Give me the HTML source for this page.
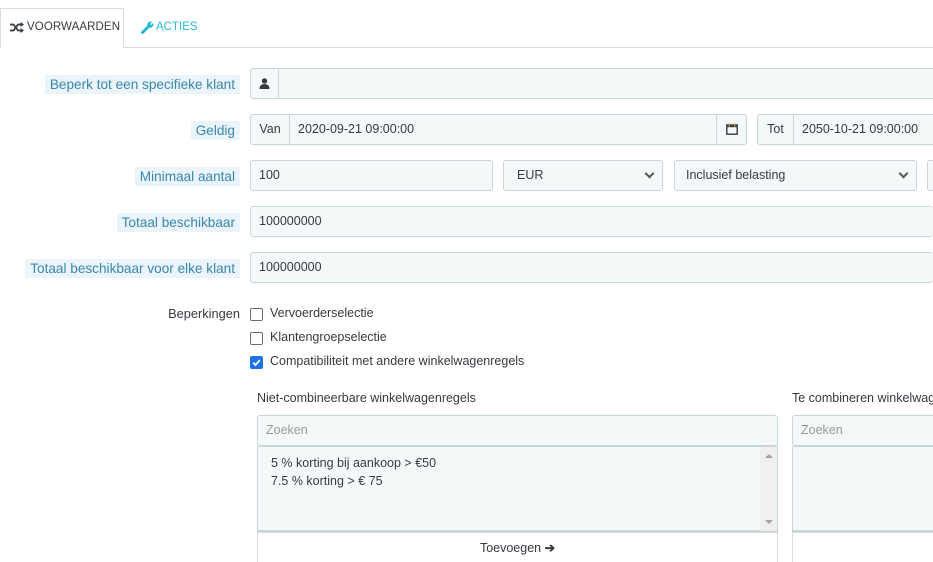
<!DOCTYPE html>
<html><head><meta charset="utf-8"><style>
*{box-sizing:border-box;margin:0;padding:0}
html,body{width:933px;height:562px;overflow:hidden}
body{background:#fff;font-family:"Liberation Sans",sans-serif;font-size:13px;color:#363a41;position:relative}
.a{position:absolute}
.lbl{position:absolute;right:693px;background:#eaf4fa;color:#3a87ad;padding:1px 5px;height:19px;line-height:17px;white-space:nowrap;font-size:13.6px}
.inp{position:absolute;background:#f5f8f9;border:1px solid #c7d6db;border-radius:3px;height:31px;line-height:29px;padding-left:8px;color:#363a41;font-size:12.5px;white-space:nowrap;overflow:hidden}
.add{position:absolute;background:#f5f8f9;border:1px solid #c7d6db;height:31px;line-height:29px;text-align:center;font-size:12.5px}
.cb{position:absolute;left:250px;width:13px;height:13px;border:1px solid #6b6b6b;border-radius:2px;background:#fff}
.ct{position:absolute;left:270px;font-size:12.5px}
.chev{position:absolute;top:9px;width:7px;height:7px;border-right:2px solid #555;border-bottom:2px solid #555;transform:rotate(45deg)}
</style></head><body>
<div class="a" style="left:0;top:8px;width:124px;height:40px;border:1px solid #d6dde0;border-bottom:none;background:#fff"></div>
<div class="a" style="left:123px;top:47px;width:810px;height:1px;background:#d6dde0"></div>
<svg class="a" style="left:10px;top:22px" width="14" height="11" viewBox="0 0 14 11"><path d="M0 2.5 H3.5 L8 8.5 H11" fill="none" stroke="#363a41" stroke-width="1.8"/><path d="M0 8.5 H3.5 L8 2.5 H11" fill="none" stroke="#363a41" stroke-width="1.8"/><path d="M10.5 0 L14 2.5 L10.5 5Z M10.5 6 L14 8.5 L10.5 11Z" fill="#363a41"/></svg>
<div class="a" style="left:27px;top:21px;font-size:11.5px;color:#363a41;letter-spacing:0.1px">VOORWAARDEN</div>
<svg class="a" style="left:141px;top:21px" width="13" height="13" viewBox="0 0 13 13"><path d="M1.5 11.5 L7 6" stroke="#25b9d7" stroke-width="3" stroke-linecap="round"/><path d="M6.5 5 A3.2 3.2 0 0 1 11 1 L9 3 L10 4 L12 2 A3.2 3.2 0 0 1 8 6.5Z" fill="#25b9d7"/></svg>
<div class="a" style="left:156px;top:21px;font-size:11.5px;color:#25b9d7">ACTIES</div>

<div class="lbl" style="top:75px">Beperk tot een specifieke klant</div>
<div class="add" style="left:250px;top:68px;width:29px;border-radius:3px 0 0 3px">
<svg width="11" height="11" viewBox="0 0 11 11" style="margin-top:9px"><circle cx="5.5" cy="3" r="2.7" fill="#363a41"/><path d="M0.5 11 Q0.5 6 5.5 6 Q10.5 6 10.5 11Z" fill="#363a41"/></svg></div>
<div class="inp" style="left:278px;top:68px;width:655px;border-radius:0;border-right:none"></div>

<div class="lbl" style="top:121px">Geldig</div>
<div class="add" style="left:250px;top:114px;width:40px;border-radius:3px 0 0 3px">Van</div>
<div class="inp" style="left:289px;top:114px;width:428px;border-radius:0">2020-09-21 09:00:00</div>
<div class="add" style="left:716px;top:114px;width:31px;border-radius:0 3px 3px 0">
<svg width="12" height="12" viewBox="0 0 12 12" style="margin-top:8px"><rect x="0.8" y="2" width="10.4" height="9.2" fill="none" stroke="#363a41" stroke-width="1.4"/><rect x="0.8" y="2" width="10.4" height="2.2" fill="#363a41"/><rect x="2.5" y="0.5" width="1.5" height="3" fill="#c48a2d"/><rect x="8" y="0.5" width="1.5" height="3" fill="#c48a2d"/></svg></div>
<div class="add" style="left:757px;top:114px;width:37px;border-radius:3px 0 0 3px">Tot</div>
<div class="inp" style="left:793px;top:114px;width:140px;border-radius:0;border-right:none">2050-10-21 09:00:00</div>

<div class="lbl" style="top:167px">Minimaal aantal</div>
<div class="inp" style="left:250px;top:160px;width:243px">100</div>
<div class="inp" style="left:503px;top:160px;width:160px;padding-left:13px">EUR<div class="chev" style="left:142px"></div></div>
<div class="inp" style="left:674px;top:160px;width:243px;padding-left:11px">Inclusief belasting<div class="chev" style="left:225px"></div></div>
<div class="inp" style="left:927px;top:160px;width:6px;border-right:none;border-radius:3px 0 0 3px"></div>

<div class="lbl" style="top:213px">Totaal beschikbaar</div>
<div class="inp" style="left:250px;top:206px;width:683px;border-right:none">100000000</div>
<div class="lbl" style="top:259px">Totaal beschikbaar voor elke klant</div>
<div class="inp" style="left:250px;top:252px;width:683px;border-right:none">100000000</div>

<div class="a" style="right:693px;top:306px;font-size:12.8px">Beperkingen</div>
<div class="cb" style="top:308px"></div><div class="ct" style="top:306px">Vervoerderselectie</div>
<div class="cb" style="top:332px"></div><div class="ct" style="top:330px">Klantengroepselectie</div>
<div class="cb" style="top:356px;background:#1a73e8;border-color:#1a73e8"><svg width="11" height="11" viewBox="0 0 11 11" style="position:absolute;left:0;top:0"><path d="M2.2 5.6 L4.5 8 L8.8 3" fill="none" stroke="#fff" stroke-width="1.8"/></svg></div>
<div class="ct" style="top:354px">Compatibiliteit met andere winkelwagenregels</div>

<div class="a" style="left:257px;top:391px;font-size:12.5px">Niet-combineerbare winkelwagenregels</div>
<div class="inp" style="left:257px;top:415px;width:521px;color:#999">Zoeken</div>
<div class="a" style="left:257px;top:446px;width:521px;height:86px;background:#f5f8f9;border:1px solid #c7d6db;border-bottom:2px solid #c7d6db;font-size:12.5px;padding:7px 0 0 13px;line-height:18px">5 % korting bij aankoop &gt; €50<br>7.5 % korting &gt; € 75
<div class="a" style="right:0;top:0;width:17px;height:84px;background:#f0f0f0"><div class="a" style="left:5px;top:7px;border:4px solid transparent;border-bottom:4px solid #a3a3a3;border-top:none"></div><div class="a" style="left:5px;bottom:7px;border:4px solid transparent;border-top:4px solid #a3a3a3;border-bottom:none"></div></div></div>
<div class="a" style="left:257px;top:532px;width:521px;height:30px;border:1px solid #d6dde0;border-bottom:none;text-align:center;line-height:30px;font-size:12.5px">Toevoegen <b>➔</b></div>

<div class="a" style="left:792px;top:391px;width:141px;overflow:hidden;font-size:12.5px;white-space:nowrap">Te combineren winkelwagenregels</div>
<div class="inp" style="left:792px;top:415px;width:141px;color:#999;border-right:none;border-radius:3px 0 0 3px">Zoeken</div>
<div class="a" style="left:792px;top:446px;width:141px;height:86px;background:#f5f8f9;border:1px solid #c7d6db;border-right:none;border-bottom:2px solid #c7d6db"></div>
<div class="a" style="left:792px;top:532px;width:141px;height:30px;border:1px solid #d6dde0;border-right:none;border-bottom:none"></div>
</body></html>
